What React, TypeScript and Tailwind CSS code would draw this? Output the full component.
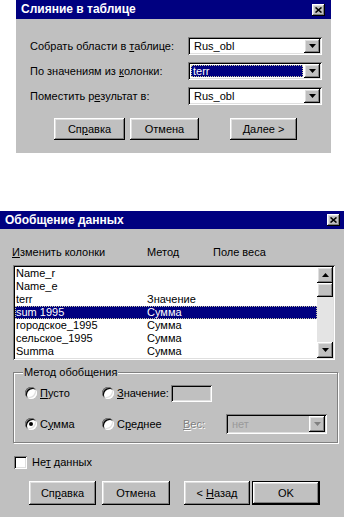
import React from "react";

const sunken =
  "shadow-[inset_1px_1px_0_#808080,inset_-1px_-1px_0_#ffffff,inset_2px_2px_0_#000000,inset_-2px_-2px_0_#dfdfdf]";
const raised =
  "shadow-[inset_-1px_-1px_0_#000000,inset_1px_1px_0_#ffffff,inset_-2px_-2px_0_#808080,inset_2px_2px_0_#dfdfdf]";

function U({ children }: { children: React.ReactNode }) {
  return <span className="underline underline-offset-[1px]">{children}</span>;
}

function DownArrow({ disabled }: { disabled?: boolean }) {
  return (
    <svg width="7" height="4" viewBox="0 0 7 4">
      <polygon points="0,0 7,0 3.5,4" fill={disabled ? "#808080" : "#000000"} />
    </svg>
  );
}

function UpArrow() {
  return (
    <svg width="7" height="4" viewBox="0 0 7 4">
      <polygon points="0,4 7,4 3.5,0" fill="#000000" />
    </svg>
  );
}

function CloseBtn() {
  return (
    <div className={`flex h-[12px] w-[13px] items-center justify-center bg-[#c0c0c0] ${raised}`}>
      <svg width="7" height="6" viewBox="0 0 7 6">
        <path d="M0.5 0.5L6.5 5.5M6.5 0.5L0.5 5.5" stroke="#000" strokeWidth="1.6" />
      </svg>
    </div>
  );
}

function Combo({
  value,
  selected,
  disabled,
  className,
}: {
  value: string;
  selected?: boolean;
  disabled?: boolean;
  className: string;
}) {
  return (
    <div
      className={`flex p-[2px] ${sunken} ${disabled ? "bg-[#c0c0c0]" : "bg-white"} ${className}`}
    >
      <div className="flex flex-1 items-center py-[1px] pl-[1px] pr-[1px]">
        {selected ? (
          <span className="flex h-full w-full items-center bg-[#000080] pl-[2px] text-white outline-1 -outline-offset-1 outline-dotted outline-[#c8c8a0]">
            {value}
          </span>
        ) : (
          <span className={`pl-[3px] ${disabled ? "text-[#9a9a9a]" : "text-black"}`}>{value}</span>
        )}
      </div>
      <div className={`flex w-[16px] items-center justify-center bg-[#c0c0c0] ${raised}`}>
        <DownArrow disabled={disabled} />
      </div>
    </div>
  );
}

function Btn({
  children,
  className,
  isDefault,
}: {
  children: React.ReactNode;
  className: string;
  isDefault?: boolean;
}) {
  if (isDefault) {
    return (
      <div className={`border border-black bg-[#c0c0c0] ${className}`}>
        <div className={`flex h-full w-full items-center justify-center ${raised}`}>{children}</div>
      </div>
    );
  }
  return (
    <div className={`flex items-center justify-center bg-[#c0c0c0] ${raised} ${className}`}>
      {children}
    </div>
  );
}

function Radio({ checked }: { checked?: boolean }) {
  return (
    <div
      className={`flex h-[12px] w-[12px] shrink-0 items-center justify-center rounded-full bg-white ${sunken}`}
    >
      {checked && <div className="h-[4px] w-[4px] rounded-full bg-black" />}
    </div>
  );
}

const rows: { name: string; method: string; sel?: boolean }[] = [
  { name: "Name_r", method: "" },
  { name: "Name_e", method: "" },
  { name: "terr", method: "Значение" },
  { name: "sum 1995", method: "Сумма", sel: true },
  { name: "городское_1995", method: "Сумма" },
  { name: "сельское_1995", method: "Сумма" },
  { name: "Summa", method: "Сумма" },
];

export default function App() {
  return (
    <div className="flex min-h-[517px] w-[347px] flex-col bg-white font-['Liberation_Sans',Arial,sans-serif] text-[11px] leading-[13px] text-black">
      {/* Dialog 1 */}
      <div className="ml-[16px] w-[315px] bg-[#c0c0c0]">
        <div className="flex h-[19px] items-center justify-between bg-[#000080] pl-[5px] pr-[6px]">
          <span className="text-[12px] font-bold text-white">Слияние в таблице</span>
          <CloseBtn />
        </div>
        <div className="pb-[13px] pt-[18px]">
          <div className="flex flex-col gap-[7px] pl-[14px] pr-[9px]">
            <div className="flex h-[18px] items-center justify-between">
              <span>
                Собрать области в <U>т</U>аблице:
              </span>
              <Combo value="Rus_obl" className="h-[18px] w-[134px]" />
            </div>
            <div className="flex h-[18px] items-center justify-between">
              <span>
                По значениям из <U>к</U>олонки:
              </span>
              <Combo value="terr" selected className="h-[18px] w-[134px]" />
            </div>
            <div className="flex h-[18px] items-center justify-between">
              <span>
                Поместить р<U>е</U>зультат в:
              </span>
              <Combo value="Rus_obl" className="h-[18px] w-[134px]" />
            </div>
          </div>
          <div className="mt-[13px] flex pl-[38px]">
            <Btn className="h-[22px] w-[71px]">
              <span>
                Сп<U>р</U>авка
              </span>
            </Btn>
            <Btn className="ml-[5px] h-[22px] w-[69px]">Отмена</Btn>
            <Btn className="ml-[31px] h-[22px] w-[67px]">
              <span>
                <U>Д</U>алее &gt;
              </span>
            </Btn>
          </div>
        </div>
      </div>

      {/* Dialog 2 */}
      <div className="mt-[58px] w-[344px] flex-1 bg-[#c0c0c0]">
        <div className="flex h-[18px] items-center justify-between bg-[#000080] pl-[5px] pr-[4px]">
          <span className="text-[12px] font-bold text-white">Обобщение данных</span>
          <CloseBtn />
        </div>
        <div className="pb-[12px]">
          <div className="mt-[17px] flex pl-[12px]">
            <span className="w-[135px]">
              <U>И</U>зменить колонки
            </span>
            <span className="w-[66px]">Метод</span>
            <span>Поле веса</span>
          </div>

          {/* list */}
          <div className={`ml-[13px] mt-[6px] flex h-[95px] w-[322px] bg-white p-[2px] ${sunken}`}>
            <div className="flex flex-1 flex-col">
              {rows.map((r) => (
                <div
                  key={r.name}
                  className={
                    r.sel
                      ? "flex h-[13px] items-center bg-[#000080] text-white outline-1 -outline-offset-1 outline-dotted outline-[#c8c8a0]"
                      : "flex h-[13px] items-center"
                  }
                >
                  <span className="w-[132px] pl-[1px]">{r.name}</span>
                  <span>{r.method}</span>
                </div>
              ))}
            </div>
            <div className="flex w-[16px] flex-col bg-[#e4e4e4]">
              <div className={`flex h-[16px] items-center justify-center bg-[#c0c0c0] ${raised}`}>
                <UpArrow />
              </div>
              <div className={`h-[14px] bg-[#c0c0c0] ${raised}`} />
              <div className="flex-1" />
              <div className={`flex h-[16px] items-center justify-center bg-[#c0c0c0] ${raised}`}>
                <DownArrow />
              </div>
            </div>
          </div>

          {/* group box */}
          <div className="relative ml-[13px] mt-[12px] w-[325px] border border-[#808080] pb-[8px] pl-[11px] pt-[10px] shadow-[inset_1px_1px_0_#ffffff,1px_1px_0_#ffffff]">
            <span className="absolute left-[9px] top-[-7px] bg-[#c0c0c0] px-[1px]">Метод обобщения</span>
            <div className="flex h-[20px] items-center">
              <div className="flex w-[77px] items-center gap-[3px]">
                <Radio />
                <span>
                  <U>П</U>усто
                </span>
              </div>
              <div className="flex items-center gap-[3px]">
                <Radio />
                <span>
                  <U>З</U>начение:
                </span>
              </div>
              <div className={`ml-[2px] h-[17px] w-[41px] bg-[#c0c0c0] ${sunken}`} />
            </div>
            <div className="mt-[11px] flex h-[20px] items-center">
              <div className="flex w-[77px] items-center gap-[3px]">
                <Radio checked />
                <span>
                  С<U>у</U>мма
                </span>
              </div>
              <div className="flex w-[81px] items-center gap-[3px]">
                <Radio />
                <span>
                  С<U>р</U>еднее
                </span>
              </div>
              <span className="w-[43px] text-[#808080] [text-shadow:1px_1px_0_#ffffff]">
                <U>В</U>ес:
              </span>
              <Combo value="нет" disabled className="h-[20px] w-[101px]" />
            </div>
          </div>

          {/* checkbox */}
          <div className="ml-[14px] mt-[13px] flex h-[13px] items-center gap-[5px]">
            <div className={`h-[13px] w-[13px] bg-white ${sunken}`} />
            <span>
              Не<U>т</U> данных
            </span>
          </div>

          {/* buttons */}
          <div className="mt-[12px] flex pl-[29px]">
            <Btn className="h-[24px] w-[67px]">
              <span>
                Сп<U>р</U>авка
              </span>
            </Btn>
            <Btn className="ml-[6px] h-[24px] w-[68px]">Отмена</Btn>
            <Btn className="ml-[14px] h-[24px] w-[66px]">
              <span>
                &lt; <U>Н</U>азад
              </span>
            </Btn>
            <Btn isDefault className="ml-[2px] h-[24px] w-[68px]">
              OK
            </Btn>
          </div>
        </div>
      </div>
    </div>
  );
}
